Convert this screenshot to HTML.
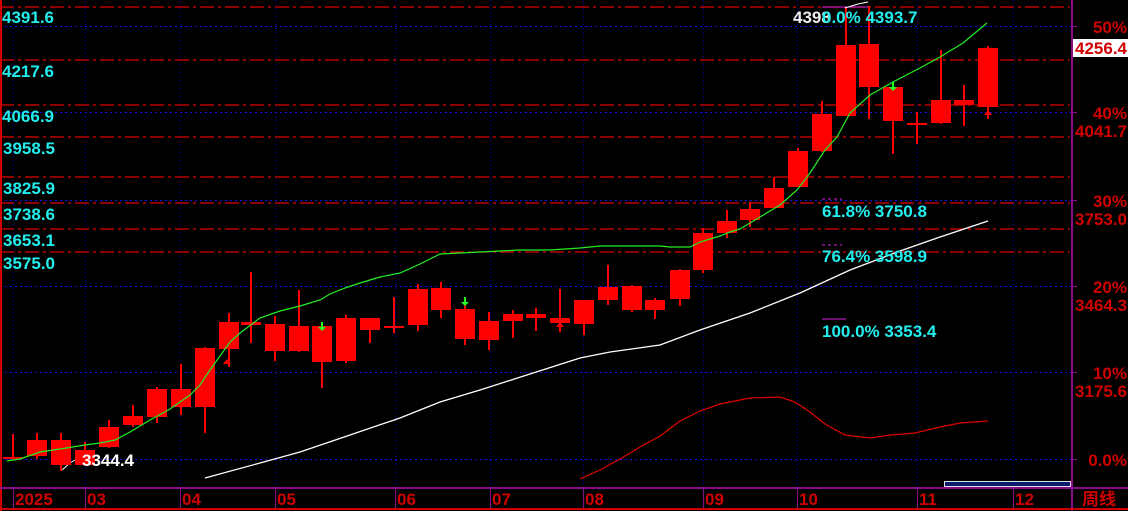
<!DOCTYPE html>
<html><head><meta charset="utf-8"><style>
html,body{margin:0;padding:0;background:#000;overflow:hidden}
svg{display:block}
text{font-family:"Liberation Sans","Noto Sans CJK SC",sans-serif;font-weight:bold}
</style></head><body>
<svg width="1128" height="511" viewBox="0 0 1128 511" xmlns="http://www.w3.org/2000/svg">
<rect width="1128" height="511" fill="#000"/>
<g stroke="#0000c8" stroke-width="1" stroke-dasharray="1,3">
<line x1="13.5" y1="0" x2="13.5" y2="488"/><line x1="85.5" y1="0" x2="85.5" y2="488"/>
<line x1="180.5" y1="0" x2="180.5" y2="488"/><line x1="275.5" y1="0" x2="275.5" y2="488"/>
<line x1="395.5" y1="0" x2="395.5" y2="488"/><line x1="490.5" y1="0" x2="490.5" y2="488"/>
<line x1="583.5" y1="0" x2="583.5" y2="488"/><line x1="703.5" y1="0" x2="703.5" y2="488"/>
<line x1="797.5" y1="0" x2="797.5" y2="488"/><line x1="917.5" y1="0" x2="917.5" y2="488"/>
<line x1="1013.5" y1="0" x2="1013.5" y2="488"/>
</g>
<g stroke="#1010e0" stroke-width="1" stroke-dasharray="2,3">
<line x1="0" y1="26.5" x2="1072" y2="26.5"/><line x1="0" y1="112.5" x2="1072" y2="112.5"/>
<line x1="0" y1="200.5" x2="1072" y2="200.5"/><line x1="0" y1="286.5" x2="1072" y2="286.5"/>
<line x1="0" y1="372.5" x2="1072" y2="372.5"/><line x1="0" y1="459.5" x2="1072" y2="459.5"/>
</g>
<g stroke="#e00000" stroke-width="1.3" stroke-dasharray="14,4,3,4">
<line x1="0" y1="7" x2="1070" y2="7"/><line x1="0" y1="60" x2="1070" y2="60"/>
<line x1="0" y1="105" x2="1070" y2="105"/><line x1="0" y1="137" x2="1070" y2="137"/>
<line x1="0" y1="177" x2="1070" y2="177"/><line x1="0" y1="203" x2="1070" y2="203"/>
<line x1="0" y1="229" x2="1070" y2="229"/><line x1="0" y1="252" x2="1070" y2="252"/>
</g>
<rect x="0" y="0" width="2" height="511" fill="#d00000"/>
<rect x="1071" y="0" width="2" height="511" fill="#8a0a8a"/>
<rect x="0" y="487" width="1128" height="2" fill="#8a0a8a"/>
<rect x="0" y="508" width="1128" height="2" fill="#d00000"/>
<g stroke="#8a0a8a" stroke-width="1"><line x1="1073" y1="26.5" x2="1077" y2="26.5"/><line x1="1073" y1="112.5" x2="1077" y2="112.5"/><line x1="1073" y1="200.5" x2="1077" y2="200.5"/><line x1="1073" y1="286.5" x2="1077" y2="286.5"/><line x1="1073" y1="372.5" x2="1077" y2="372.5"/><line x1="1073" y1="459.5" x2="1077" y2="459.5"/></g>
<g stroke="#8a0a8a" stroke-width="1"><line x1="13.5" y1="489" x2="13.5" y2="508"/><line x1="85.5" y1="489" x2="85.5" y2="508"/><line x1="180.5" y1="489" x2="180.5" y2="508"/><line x1="275.5" y1="489" x2="275.5" y2="508"/><line x1="395.5" y1="489" x2="395.5" y2="508"/><line x1="490.5" y1="489" x2="490.5" y2="508"/><line x1="583.5" y1="489" x2="583.5" y2="508"/><line x1="703.5" y1="489" x2="703.5" y2="508"/><line x1="797.5" y1="489" x2="797.5" y2="508"/><line x1="917.5" y1="489" x2="917.5" y2="508"/><line x1="1013.5" y1="489" x2="1013.5" y2="508"/></g>
<rect x="944.5" y="481.5" width="126" height="5" fill="#0a1e6e" stroke="#ddd" stroke-width="1"/>
<polyline fill="none" stroke="#fff" stroke-width="1.3" points="205,478 260,463 300,452 350,435 400,418 440,402 480,390 530,374 580,358 610,352 660,345 700,330 750,313 800,293 850,270 900,251 940,237 988,221"/>
<polyline fill="none" stroke="#fff" stroke-width="1" points="62,470 70,463 75,460"/>
<polyline fill="none" stroke="#e00000" stroke-width="1.2" points="580,479 600,470 620,459 640,447 660,436 680,421 700,411 720,404 750,398 780,397 795,402 810,412 825,424 845,435 870,438 890,435 915,433 940,427 960,423 988,421"/>
<g fill="#ff0000">
<rect x="12" y="434" width="2" height="26"/><rect x="3" y="457" width="20" height="2"/>
<rect x="36" y="433" width="2" height="26"/><rect x="27" y="440" width="20" height="16"/>
<rect x="60" y="433" width="2" height="38"/><rect x="51" y="440" width="20" height="25"/>
<rect x="84" y="442" width="2" height="23"/><rect x="75" y="450" width="20" height="15"/>
<rect x="108" y="420" width="2" height="28"/><rect x="99" y="427" width="20" height="20"/>
<rect x="132" y="405" width="2" height="22"/><rect x="123" y="416" width="20" height="9"/>
<rect x="156" y="387" width="2" height="36"/><rect x="147" y="389" width="20" height="28"/>
<rect x="180" y="364" width="2" height="51"/><rect x="171" y="389" width="20" height="18"/>
<rect x="204" y="347" width="2" height="86"/><rect x="195" y="348" width="20" height="59"/>
<rect x="228" y="313" width="2" height="54"/><rect x="219" y="322" width="20" height="27"/>
<rect x="250" y="272" width="2" height="71"/><rect x="241" y="322" width="20" height="3"/>
<rect x="274" y="316" width="2" height="45"/><rect x="265" y="324" width="20" height="27"/>
<rect x="298" y="290" width="2" height="62"/><rect x="289" y="326" width="20" height="25"/>
<rect x="321" y="322" width="2" height="66"/><rect x="312" y="326" width="20" height="36"/>
<rect x="345" y="315" width="2" height="48"/><rect x="336" y="318" width="20" height="43"/>
<rect x="369" y="318" width="2" height="25"/><rect x="360" y="318" width="20" height="12"/>
<rect x="393" y="297" width="2" height="36"/><rect x="384" y="326" width="20" height="2"/>
<rect x="417" y="284" width="2" height="47"/><rect x="408" y="289" width="20" height="36"/>
<rect x="440" y="282" width="2" height="36"/><rect x="431" y="288" width="20" height="22"/>
<rect x="464" y="303" width="2" height="42"/><rect x="455" y="309" width="20" height="30"/>
<rect x="488" y="312" width="2" height="38"/><rect x="479" y="321" width="20" height="19"/>
<rect x="512" y="310" width="2" height="28"/><rect x="503" y="314" width="20" height="7"/>
<rect x="535" y="308" width="2" height="23"/><rect x="526" y="314" width="20" height="4"/>
<rect x="559" y="289" width="2" height="43"/><rect x="550" y="318" width="20" height="5"/>
<rect x="583" y="300" width="2" height="35"/><rect x="574" y="300" width="20" height="24"/>
<rect x="607" y="265" width="2" height="40"/><rect x="598" y="287" width="20" height="13"/>
<rect x="631" y="285" width="2" height="27"/><rect x="622" y="286" width="20" height="24"/>
<rect x="654" y="298" width="2" height="21"/><rect x="645" y="300" width="20" height="10"/>
<rect x="679" y="269" width="2" height="37"/><rect x="670" y="270" width="20" height="29"/>
<rect x="702" y="228" width="2" height="45"/><rect x="693" y="233" width="20" height="37"/>
<rect x="726" y="210" width="2" height="28"/><rect x="717" y="221" width="20" height="12"/>
<rect x="749" y="202" width="2" height="25"/><rect x="740" y="209" width="20" height="11"/>
<rect x="773" y="177" width="2" height="31"/><rect x="764" y="188" width="20" height="20"/>
<rect x="797" y="148" width="2" height="39"/><rect x="788" y="151" width="20" height="36"/>
<rect x="821" y="101" width="2" height="51"/><rect x="812" y="114" width="20" height="37"/>
<rect x="845" y="7" width="2" height="109"/><rect x="836" y="45" width="20" height="71"/>
<rect x="868" y="6" width="2" height="113"/><rect x="859" y="44" width="20" height="43"/>
<rect x="892" y="85" width="2" height="69"/><rect x="883" y="87" width="20" height="34"/>
<rect x="916" y="112" width="2" height="32"/><rect x="907" y="123" width="20" height="2"/>
<rect x="940" y="50" width="2" height="74"/><rect x="931" y="100" width="20" height="23"/>
<rect x="963" y="85" width="2" height="41"/><rect x="954" y="100" width="20" height="5"/>
<rect x="987" y="46" width="2" height="73"/><rect x="978" y="48" width="20" height="59"/>
<polygon points="988,110 984,115 992,115"/>
<polygon points="560,322 556,327 564,327"/>
<polygon points="227,359 223,364 231,364"/>
</g>
<g fill="#22ff22" stroke="#22ff22">
<line x1="322" y1="322" x2="322" y2="328" stroke-width="2"/><polygon points="318,327 326,327 322,331" stroke="none"/>
<line x1="465" y1="297" x2="465" y2="303" stroke-width="2"/><polygon points="461,302 469,302 465,306" stroke="none"/>
<line x1="893" y1="82" x2="893" y2="88" stroke-width="2"/><polygon points="889,87 897,87 893,91" stroke="none"/>
</g>
<polyline fill="none" stroke="#22ee22" stroke-width="1.2" points="7,461 20,459 40,452 60,449 85,445 100,443 115,440 130,432 150,420 170,409 190,395 200,385 210,370 220,356 230,342 240,333 260,318 280,311 300,306 320,300 330,294 345,288 360,283 380,277 400,273 420,264 440,254 460,253 480,252 500,251 520,250 550,250 580,248 600,246 660,246 670,247 690,247 700,242 720,236 730,232 740,229 760,217 780,205 797,190 810,173 825,150 837,137 850,113 870,95 893,82 920,68 940,57 963,43 987,23"/>
<line x1="822" y1="7" x2="868" y2="7" stroke="#e020e0" stroke-width="1"/>
<line x1="822" y1="199" x2="842" y2="199" stroke="#e020e0" stroke-dasharray="3,3"/>
<line x1="822" y1="245" x2="842" y2="245" stroke="#e020e0" stroke-dasharray="3,3"/>
<line x1="822" y1="319" x2="846" y2="319" stroke="#e020e0" stroke-width="1"/>
<polyline fill="none" stroke="#fff" stroke-width="1" points="845,8 858,4 868,2"/>
<g fill="#22eeee" font-size="17">
<text x="2" y="23">4391.6</text><text x="2" y="77">4217.6</text><text x="2" y="122">4066.9</text>
<text x="3" y="154">3958.5</text><text x="3" y="194">3825.9</text><text x="3" y="220">3738.6</text>
<text x="3" y="246">3653.1</text><text x="3" y="269">3575.0</text>
</g>
<text x="82" y="466" fill="#fff" font-size="17" font-weight="normal">3344.4</text>
<text x="793" y="23" fill="#eee" font-size="17" font-weight="normal">4398</text>
<g fill="#22eeee" font-size="17">
<text x="822" y="23">0.0% 4393.7</text>
<text x="822" y="217">61.8% 3750.8</text>
<text x="822" y="262">76.4% 3598.9</text>
<text x="822" y="337">100.0% 3353.4</text>
</g>
<rect x="1073" y="39" width="55" height="18" fill="#fff"/>
<polygon points="1073,48 1077,43 1077,53" fill="#fff"/>
<g fill="#d00000" font-size="17" text-anchor="end">
<text x="1127" y="33">50%</text><text x="1127" y="54">4256.4</text>
<text x="1127" y="119">40%</text><text x="1127" y="137">4041.7</text>
<text x="1127" y="207">30%</text><text x="1127" y="225">3753.0</text>
<text x="1127" y="293">20%</text><text x="1127" y="311">3464.3</text>
<text x="1127" y="379">10%</text><text x="1127" y="397">3175.6</text>
<text x="1127" y="466">0.0%</text>
</g>
<g fill="#d00000" font-size="17">
<text x="15" y="505">2025</text><text x="87" y="505">03</text><text x="182" y="505">04</text>
<text x="277" y="505">05</text><text x="397" y="505">06</text><text x="492" y="505">07</text>
<text x="585" y="505">08</text><text x="705" y="505">09</text><text x="799" y="505">10</text>
<text x="919" y="505">11</text><text x="1015" y="505">12</text>
<text x="1082" y="505" font-weight="normal">周线</text>
</g>
</svg>
</body></html>
